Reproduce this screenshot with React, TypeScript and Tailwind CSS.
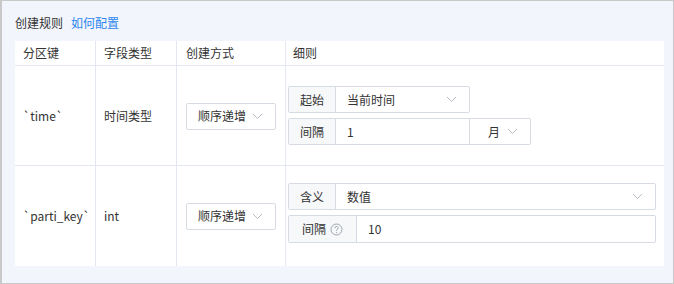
const font = { fontFamily: '"Noto Sans CJK SC", "Noto Sans", sans-serif' }

function Chevron() {
  return (
    <svg width="11" height="7" viewBox="0 0 11 7" fill="none" className="shrink-0">
      <path d="M1 1l4.5 4.5L10 1" stroke="#b6bac3" strokeWidth="1" />
    </svg>
  )
}

function Help() {
  return (
    <svg width="13" height="13" viewBox="0 0 13 13" fill="none" className="shrink-0">
      <circle cx="6.5" cy="6.5" r="5.5" stroke="#9ea3ad" strokeWidth="1" />
      <path d="M4.9 5.1a1.6 1.6 0 1 1 2.3 1.4c-.5.3-.7.6-.7 1.1v.3" stroke="#9ea3ad" strokeWidth="1" />
      <circle cx="6.5" cy="9.6" r="0.6" fill="#9ea3ad" />
    </svg>
  )
}

function Label({ children, w }: { children: React.ReactNode; w: string }) {
  return (
    <div className={`${w} h-full flex items-center justify-center gap-1 bg-[#f7f8fa] border-r border-[#d7dbe2] shrink-0`}>
      {children}
    </div>
  )
}

function SelectBox({ text, className }: { text: string; className?: string }) {
  return (
    <div className={`h-[27px] flex items-center justify-between pl-[11px] pr-[12px] border border-[#d7dbe2] rounded-[2px] bg-white ${className ?? ""}`}>
      <span>{text}</span>
      <Chevron />
    </div>
  )
}

export default function App() {
  return (
    <div className="w-[674px] h-[284px] bg-[#f2f5fc] border border-l-2 border-[#c9c9c9] text-[12px] text-[#333] px-[13px]" style={font}>
      <div className="pt-[13px] leading-[18px] mb-[9px] flex gap-[8px]">
        <span>创建规则</span>
        <span className="text-[#2b86f0]">如何配置</span>
      </div>
      <div className="bg-white w-[649px] grid grid-cols-[81px_81px_109px_1fr]">
        <div className="h-[25px] flex items-center px-2 border-r border-b border-[#e2e7f2]">分区键</div>
        <div className="h-[25px] flex items-center px-2 border-r border-b border-[#e2e7f2]">字段类型</div>
        <div className="h-[25px] flex items-center pl-[9px] border-r border-b border-[#e2e7f2]">创建方式</div>
        <div className="h-[25px] flex items-center pl-[7px] border-b border-[#e2e7f2]">细则</div>

        <div className="h-[100px] flex items-center px-2 border-r border-b border-[#e2e7f2]">`time`</div>
        <div className="h-[100px] flex items-center px-2 border-r border-b border-[#e2e7f2]">时间类型</div>
        <div className="h-[100px] flex items-center pl-[9px] border-r border-b border-[#e2e7f2]">
          <SelectBox text="顺序递增" className="w-[90px] mt-[1px]" />
        </div>
        <div className="h-[100px] flex flex-col justify-center gap-[5px] pl-[2px] border-b border-[#e2e7f2]">
          <div className="w-[182px] h-[27px] flex items-center border border-[#d7dbe2] rounded-[2px]">
            <Label w="w-[47px]">起始</Label>
            <div className="flex-1 flex items-center justify-between pl-[11px] pr-[12px]">
              <span>当前时间</span>
              <Chevron />
            </div>
          </div>
          <div className="w-[243px] h-[27px] flex items-center border border-[#d7dbe2] rounded-[2px]">
            <Label w="w-[47px]">间隔</Label>
            <div className="w-[134px] h-full flex items-center pl-[11px] border-r border-[#d7dbe2]">1</div>
            <div className="flex-1 flex items-center justify-between pl-[18px] pr-[12px]">
              <span>月</span>
              <Chevron />
            </div>
          </div>
        </div>

        <div className="h-[100px] flex items-center px-2 border-r border-[#e2e7f2]">`parti_key`</div>
        <div className="h-[100px] flex items-center px-2 border-r border-[#e2e7f2]">int</div>
        <div className="h-[100px] flex items-center pl-[9px] border-r border-[#e2e7f2]">
          <SelectBox text="顺序递增" className="w-[90px]" />
        </div>
        <div className="h-[100px] flex flex-col justify-center gap-[5px] pl-[2px] pr-[8px] pb-[6px]">
          <div className="h-[27px] flex items-center border border-[#d7dbe2] rounded-[2px]">
            <Label w="w-[47px]">含义</Label>
            <div className="flex-1 flex items-center justify-between pl-[11px] pr-[12px]">
              <span>数值</span>
              <Chevron />
            </div>
          </div>
          <div className="h-[28px] flex items-center border border-[#d7dbe2] rounded-[2px]">
            <Label w="w-[68px]">
              <span>间隔</span>
              <Help />
            </Label>
            <div className="flex-1 pl-[11px]">10</div>
          </div>
        </div>
      </div>
    </div>
  )
}
